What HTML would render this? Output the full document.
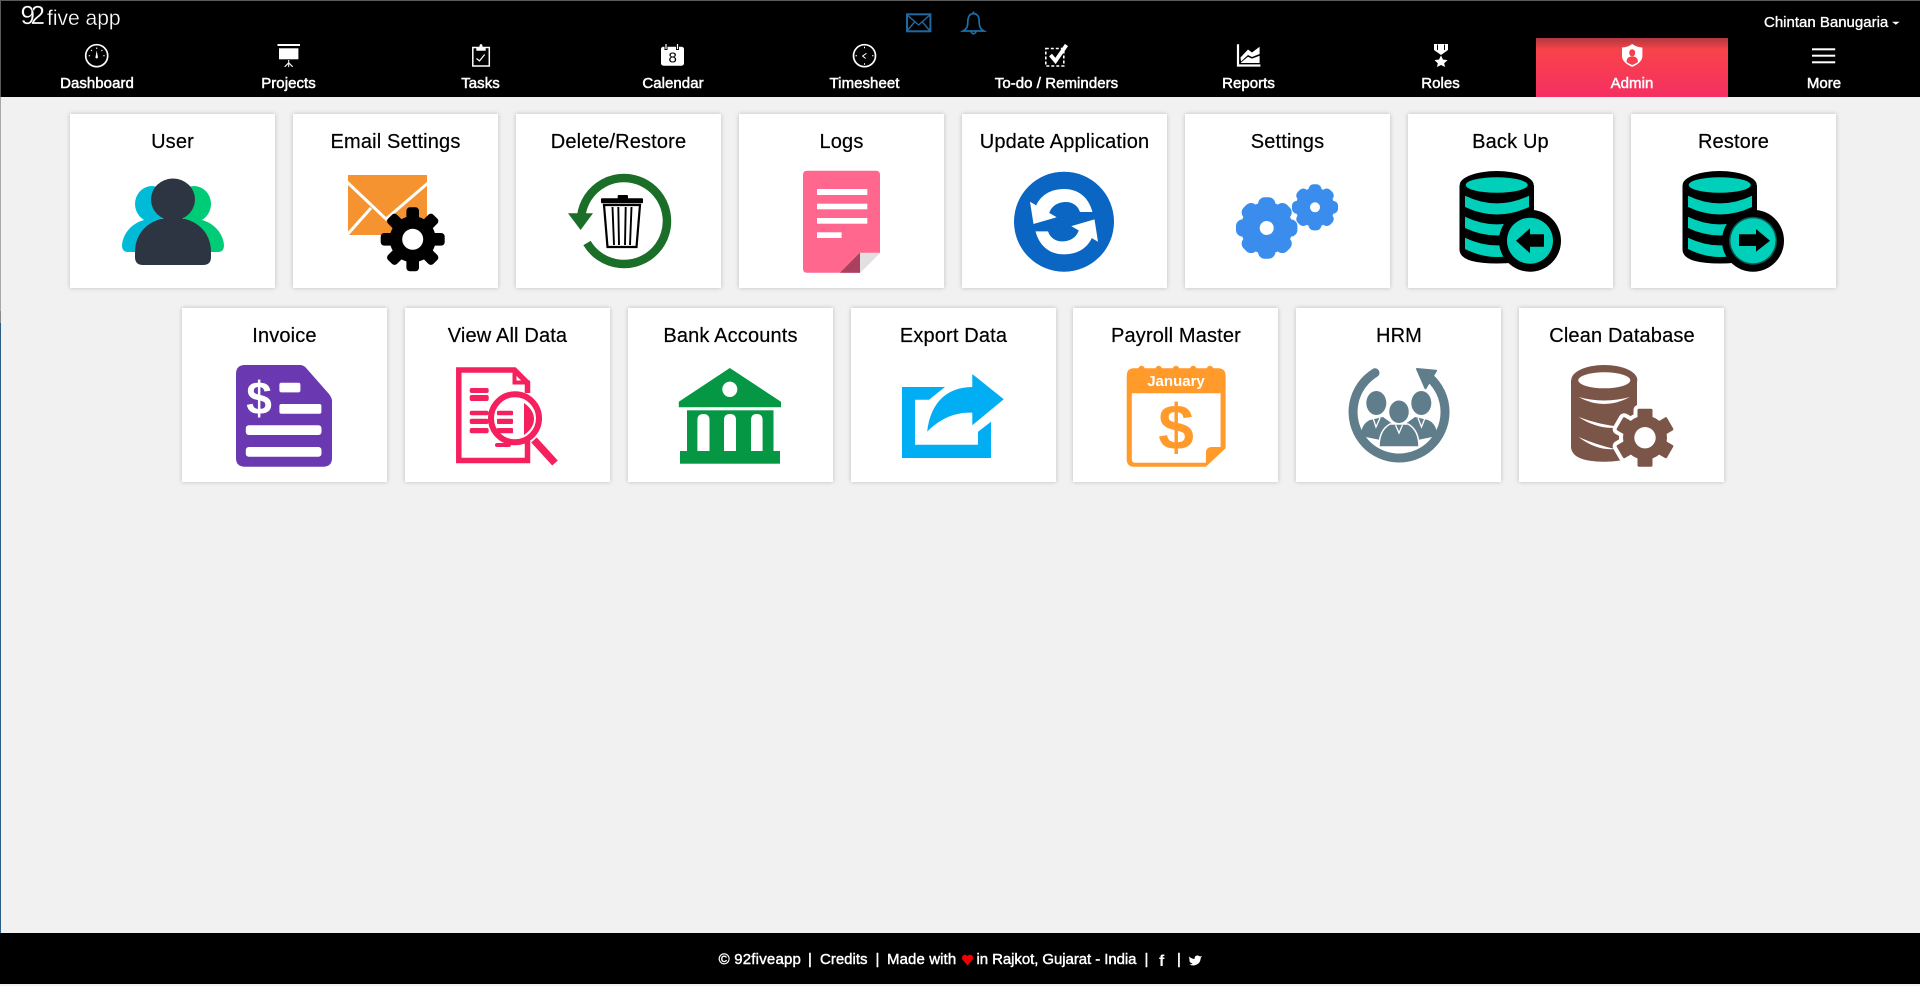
<!DOCTYPE html>
<html lang="en"><head><meta charset="utf-8"><title>Admin</title>
<style>
html,body{margin:0;padding:0;width:1920px;height:986px;overflow:hidden;background:#f1f1f1}
svg{display:block;position:absolute;left:0;top:0}
text{font-family:"Liberation Sans",Arial,sans-serif}
.c{fill:#fff;filter:drop-shadow(0 0 2px rgba(0,0,0,.22))}
.t{font-size:20px;fill:#000;text-anchor:middle;letter-spacing:.15px;stroke:#000;stroke-width:.2px}
.n{font-size:15px;fill:#fff;text-anchor:middle;stroke:#fff;stroke-width:.5px;letter-spacing:.05px}
.f{font-size:15px;fill:#fff;stroke:#fff;stroke-width:.42px}
</style></head><body>
<svg width="1920" height="986" viewBox="0 0 1920 986" xmlns="http://www.w3.org/2000/svg">
<defs>
<linearGradient id="adm" x1="0" y1="0" x2="0" y2="1"><stop offset="0" stop-color="#b0383e"/><stop offset=".2" stop-color="#f9434a"/><stop offset="1" stop-color="#f52f62"/></linearGradient>
<g id="g8"><circle r="23"/><rect x="-6.3" y="-32" width="12.6" height="64" rx="3.5"/><rect x="-6.3" y="-32" width="12.6" height="64" rx="3.5" transform="rotate(45)"/><rect x="-6.3" y="-32" width="12.6" height="64" rx="3.5" transform="rotate(90)"/><rect x="-6.3" y="-32" width="12.6" height="64" rx="3.5" transform="rotate(135)"/></g>
<g id="g8b"><circle r="27"/><rect x="-9" y="-32" width="18" height="64" rx="7"/><rect x="-9" y="-32" width="18" height="64" rx="7" transform="rotate(45)"/><rect x="-9" y="-32" width="18" height="64" rx="7" transform="rotate(90)"/><rect x="-9" y="-32" width="18" height="64" rx="7" transform="rotate(135)"/></g>
<g id="g6"><circle r="22"/><rect x="-7.5" y="-29" width="15" height="58" rx="1.5"/><rect x="-7.5" y="-29" width="15" height="58" rx="1.5" transform="rotate(60)"/><rect x="-7.5" y="-29" width="15" height="58" rx="1.5" transform="rotate(120)"/></g>
</defs>

<rect width="1920" height="986" fill="#f1f1f1"/>
<rect x="0" y="0" width="1" height="311" fill="#a8a8a8"/>
<rect x="0" y="311" width="1" height="12" fill="#8a8a8a"/>
<rect x="0" y="323" width="1" height="610" fill="#2b5d85"/>

<!-- header -->
<rect width="1920" height="97" fill="#000"/>
<rect width="1920" height="1" fill="#5a5a5a"/>
<rect width="1" height="97" fill="#5a5a5a"/>
<rect x="1536" y="38" width="192" height="59" fill="url(#adm)"/>

<!-- logo -->
<text x="20.5" y="24" font-size="26" letter-spacing="-4.500" fill="#fff" stroke="#000" stroke-width=".25">92</text>
<text x="47" y="25" font-size="21" fill="#fff" stroke="#000" stroke-width=".3">five app</text>

<!-- top icons -->
<g fill="none" stroke="#22689e" stroke-width="2">
<rect x="907" y="14.300" width="23.400" height="17"/><path d="M907 14.800L918.600 25L930 14.800M907 31L915 21.500M930 31L922 21.500" stroke-width="1.400"/>
</g>
<path d="M973.500 11.500V13.500C968.500 14 967.800 18 967.800 22C967.800 27 966.500 29 963 31H984C980.500 29 979.200 27 979.200 22C979.200 18 978.500 14 973.500 13.500M970.800 31.500Q973.500 36 976.200 31.500" fill="none" stroke="#1d6fa8" stroke-width="1.700"/>

<text x="1764" y="27" font-size="15" fill="#fff" stroke="#fff" stroke-width=".35">Chintan Banugaria</text>
<path d="M1892 21.700H1899.600L1895.800 24.800Z" fill="#fff"/>

<!-- nav icons -->
<g fill="none" stroke="#fff" stroke-width="1.700">
<circle cx="96.700" cy="55.700" r="11"/>
<path d="M96.700 47.500v1.500M91 50l1 1M102.400 50l-1 1M88.700 55.700h1.500M104.700 55.700h-1.500" stroke-width="1"/>
</g>
<path d="M96.700 50.500L98 57.500Q96.700 59.500 95.400 57.500Z" fill="#fff"/>

<g fill="#fff">
<rect x="277.500" y="44" width="22.500" height="2"/><rect x="279" y="48.300" width="19.400" height="11"/>
<path d="M288.200 60h1v2.500l4 4-1 .6-3-3v3h-1v-3l-3 3-1-.6 4-4z"/>
</g>
<g fill="none" stroke="#fff" stroke-width="1.500">
<rect x="472.800" y="47.500" width="16.500" height="18.500"/>
<path d="M476.500 58.500l3 2.400 5.200-6.400" stroke-width="1.200"/>
</g>
<path d="M476.300 47h3q.3-3 1.700-3t1.700 3h3v3.700h-9.400z" fill="#fff"/>

<rect x="661" y="46.700" width="23" height="19" rx="2.500" fill="#fff"/>
<path d="M666 44v6M677.500 44v6" stroke="#000" stroke-width="3"/>
<path d="M666 44v5M677.500 44v5" stroke="#fff" stroke-width="1.200"/>
<text x="672.700" y="62.500" font-size="15" text-anchor="middle" fill="#000">8</text>

<g fill="none" stroke="#fff" stroke-width="1.700">
<circle cx="864.500" cy="55.700" r="11"/>
<path d="M866.500 53.300L862.600 56L865.700 58.500" stroke-width="1"/>
<path d="M864.500 46.700v1.500M864.500 63.200v1.500M855.500 55.700h1.500M872 55.700h1.500" stroke-width="1"/>
</g>

<rect x="1045.800" y="48.500" width="18" height="17.500" fill="none" stroke="#fff" stroke-width="1.600" stroke-dasharray="3 2"/>
<path d="M1050.500 55L1055.500 61L1066.500 45" fill="none" stroke="#fff" stroke-width="3.800"/>

<path d="M1238 44.300V65.500H1260.400" fill="none" stroke="#fff" stroke-width="2.200"/>
<path d="M1240.500 57.500L1248 49.500L1252 52.500L1259.600 46.700V54L1252 57L1248 55L1241 61.500ZM1241 63V62.500L1248 56.800L1252 58.600L1259.600 55.700V63Z" fill="#fff"/>

<path d="M1434 44H1448V50L1441 55L1434 50Z" fill="#fff"/>
<path d="M1437.500 44.500V50M1444.500 44.500V50" stroke="#000" stroke-width="1"/>
<path d="M1441 55.500L1443 59.500L1447.500 60.100L1444.200 63.200L1445 67L1441 65L1437 67L1437.800 63.200L1434.500 60.100L1439 59.500Z" fill="#fff"/>

<path d="M1632.200 44Q1637 47.500 1642.400 47.500V56Q1642.400 62.500 1632.200 66.900Q1622 62.500 1622 56V47.500Q1627.400 47.500 1632.200 44Z" fill="#fff"/>
<ellipse cx="1632.200" cy="52.800" rx="3" ry="3.600" fill="#f6404f"/>
<path d="M1626.500 62Q1626.500 57.500 1630.500 56.500H1634Q1638 57.500 1638 62Q1635 64 1632.200 65Q1629.500 64 1626.500 62Z" fill="#f6404f"/>

<g fill="#fff"><rect x="1812" y="48.300" width="23.200" height="2"/><rect x="1812" y="54.700" width="23.200" height="2"/><rect x="1812" y="61.300" width="23.200" height="2"/></g>

<!-- nav labels -->
<text class="n" x="97" y="88">Dashboard</text>
<text class="n" x="288.500" y="88">Projects</text>
<text class="n" x="480.500" y="88">Tasks</text>
<text class="n" x="673" y="88">Calendar</text>
<text class="n" x="864.500" y="88">Timesheet</text>
<text class="n" x="1056.500" y="88">To-do / Reminders</text>
<text class="n" x="1248.500" y="88">Reports</text>
<text class="n" x="1440.500" y="88">Roles</text>
<text class="n" x="1632" y="88">Admin</text>
<text class="n" x="1824" y="88">More</text>

<!-- cards row 1 -->
<rect class="c" x="70" y="114" width="205" height="174"/>
<rect class="c" x="293" y="114" width="205" height="174"/>
<rect class="c" x="516" y="114" width="205" height="174"/>
<rect class="c" x="739" y="114" width="205" height="174"/>
<rect class="c" x="962" y="114" width="205" height="174"/>
<rect class="c" x="1185" y="114" width="205" height="174"/>
<rect class="c" x="1408" y="114" width="205" height="174"/>
<rect class="c" x="1631" y="114" width="205" height="174"/>
<!-- cards row 2 -->
<rect class="c" x="182" y="308" width="205" height="174"/>
<rect class="c" x="405" y="308" width="205" height="174"/>
<rect class="c" x="628" y="308" width="205" height="174"/>
<rect class="c" x="851" y="308" width="205" height="174"/>
<rect class="c" x="1073" y="308" width="205" height="174"/>
<rect class="c" x="1296" y="308" width="205" height="174"/>
<rect class="c" x="1519" y="308" width="205" height="174"/>

<text class="t" x="172.500" y="148">User</text>
<text class="t" x="395.500" y="148">Email Settings</text>
<text class="t" x="618.500" y="148">Delete/Restore</text>
<text class="t" x="841.500" y="148">Logs</text>
<text class="t" x="1064.500" y="148">Update Application</text>
<text class="t" x="1287.500" y="148">Settings</text>
<text class="t" x="1510.500" y="148">Back Up</text>
<text class="t" x="1733.500" y="148">Restore</text>
<text class="t" x="284.500" y="342">Invoice</text>
<text class="t" x="507.500" y="342">View All Data</text>
<text class="t" x="730.500" y="342">Bank Accounts</text>
<text class="t" x="953.500" y="342">Export Data</text>
<text class="t" x="1176" y="342">Payroll Master</text>
<text class="t" x="1399" y="342">HRM</text>
<text class="t" x="1622" y="342">Clean Database</text>

<!-- User -->
<ellipse cx="152" cy="204" rx="17" ry="18" fill="#00bbd8"/>
<path d="M122 245C123 232 135 219 152 219H160V252H128Q122 252 122 245Z" fill="#00bbd8"/>
<ellipse cx="194" cy="204" rx="17" ry="18" fill="#00cc78"/>
<path d="M224 245C223 232 211 219 194 219H186V252H218Q224 252 224 245Z" fill="#00cc78"/>
<ellipse cx="173" cy="199.500" rx="22" ry="21" fill="#2d3542"/>
<path d="M135 252C135 232 150 217.500 173 217.500C196 217.500 211 232 211 252V257Q211 265 203 265H143Q135 265 135 257Z" fill="#2d3542"/>

<!-- Email settings -->
<rect x="348" y="175" width="79" height="60" fill="#f59331"/>
<path d="M347 182L386 219L428 183M371 208L347 235" fill="none" stroke="#fff" stroke-width="3"/>
<use href="#g8" transform="translate(412.700 239.300)" fill="#000"/>
<ellipse cx="412.700" cy="239.300" rx="10.500" ry="10.500" fill="#fff"/>

<!-- Delete/Restore -->
<path d="M587 243A43 43 0 1 0 581.400 215" fill="none" stroke="#1a6e28" stroke-width="8.500"/>
<path d="M568 213.300H593L580.600 230Z" fill="#1a6e28"/>
<rect x="601" y="198.300" width="42" height="5" rx="1" fill="#000"/>
<rect x="617.700" y="195" width="10.300" height="4" rx="1" fill="#000"/>
<path d="M604 205H640L636.500 247H607.500Z" fill="none" stroke="#000" stroke-width="2.200"/>
<path d="M612.500 207L614 245M618.300 207L619 245M625.700 207L625 245M631.500 207L630 245" stroke="#000" stroke-width="1.900" fill="none"/>

<!-- Logs -->
<path d="M807 170.700H876Q880 170.700 880 174.700V252.700L860 272.700H807Q803 272.700 803 268.700V174.700Q803 170.700 807 170.700Z" fill="#ff678f"/>
<g fill="#fff"><rect x="817" y="189" width="50.300" height="6"/><rect x="817" y="203.700" width="50.300" height="5.600"/><rect x="817" y="218" width="50.300" height="5.700"/><rect x="817" y="232.300" width="24.600" height="5.700"/></g>
<path d="M860 252.700L840 272.700H860Z" fill="#a8405e"/>
<path d="M860 252.700H880L860 272.700Z" fill="#e0e0e0"/>

<!-- Update -->
<circle cx="1064" cy="221.700" r="50" fill="#0a66c2"/>
<g fill="#fff">
<path d="M1092.500 212C1088 195 1076 189 1064 189C1050 189 1040 196 1036 206L1049 214C1051 206 1058 202 1066 202C1073 202 1078 206 1080 212Z"/>
<path d="M1030 201.700L1033.500 224L1056.700 217.300Z"/>
</g>
<g fill="#fff" transform="rotate(180 1064 221.700)">
<path d="M1092.500 212C1088 195 1076 189 1064 189C1050 189 1040 196 1036 206L1049 214C1051 206 1058 202 1066 202C1073 202 1078 206 1080 212Z"/>
<path d="M1030 201.700L1033.500 224L1056.700 217.300Z"/>
</g>

<!-- Settings -->
<use href="#g8b" transform="translate(1266.700 228) scale(.96)" fill="#3a8ced"/>
<circle cx="1266.700" cy="228" r="7" fill="#fff"/>
<use href="#g8b" transform="translate(1315 207.300) scale(.72)" fill="#3a8ced"/>
<circle cx="1315" cy="207.300" r="5" fill="#fff"/>

<!-- Back up -->
<ellipse cx="1496.700" cy="185" rx="37" ry="14" fill="#000"/>
<path d="M1459.500 185V250Q1460 263.500 1497 263.500Q1534 263.500 1534 250V185Z" fill="#000"/>
<ellipse cx="1496.700" cy="185" rx="31" ry="7.700" fill="#00cfb9"/>
<path d="M1465 195.700Q1497 211 1529 195.700V207Q1497 222 1465 207Z" fill="#00cfb9"/>
<path d="M1465 216.700Q1497 232 1529 216.700V228Q1497 243 1465 228Z" fill="#00cfb9"/>
<path d="M1465 237.700Q1497 253 1529 237.700V249Q1497 265 1465 249Z" fill="#00cfb9"/>
<circle cx="1530" cy="240.700" r="31" fill="#000"/>
<circle cx="1530" cy="240.700" r="23" fill="#00cfb9"/>
<path d="M1516 240.700L1530 228.300V234.300H1544V246.700H1530V253.300Z" fill="#000"/>

<!-- Restore -->
<ellipse cx="1719.700" cy="185" rx="37" ry="14" fill="#000"/>
<path d="M1682.500 185V250Q1683 263.500 1720 263.500Q1757 263.500 1757 250V185Z" fill="#000"/>
<ellipse cx="1719.700" cy="185" rx="31" ry="7.700" fill="#00cfb9"/>
<path d="M1688 195.700Q1720 211 1752 195.700V207Q1720 222 1688 207Z" fill="#00cfb9"/>
<path d="M1688 216.700Q1720 232 1752 216.700V228Q1720 243 1688 228Z" fill="#00cfb9"/>
<path d="M1688 237.700Q1720 253 1752 237.700V249Q1720 265 1688 249Z" fill="#00cfb9"/>
<circle cx="1753" cy="240.700" r="31" fill="#000"/>
<circle cx="1753" cy="240.700" r="24" fill="#06564f"/>
<circle cx="1753" cy="240.700" r="22.500" fill="#00cfb9"/>
<path d="M1739 234.300H1756V229L1770 240.700L1756 251.700V246H1739Z" fill="#000"/>

<!-- Invoice -->
<path d="M245 365H300Q304 365 307 369L329 394Q332 398 332 401V458Q332 466.700 323 466.700H245Q236 466.700 236 458V374Q236 365 245 365Z" fill="#6a38b0"/>
<text x="259" y="414" font-size="46" font-weight="bold" fill="#fff" text-anchor="middle">$</text>
<g fill="#fff"><rect x="279.400" y="382.700" width="21" height="9.700" rx="2"/><rect x="279.400" y="404" width="42" height="9.700" rx="2"/><rect x="245.800" y="425.300" width="75.700" height="9.700" rx="3"/><rect x="245.800" y="447" width="75.700" height="9.700" rx="3"/></g>

<!-- View all data -->
<path d="M527.500 441V460.500H458.800V370H514.500L527.500 383V393" fill="none" stroke="#f5205e" stroke-width="5.500"/>
<path d="M514.500 369V382.500H530" fill="none" stroke="#f5205e" stroke-width="4"/>
<g fill="#f5205e"><rect x="469.700" y="388" width="19" height="5" rx="2"/><rect x="469.700" y="395" width="19" height="6" rx="2"/><rect x="469.700" y="410.700" width="19" height="4.500" rx="2"/><rect x="469.700" y="418.700" width="19" height="5.300" rx="2"/><rect x="469.700" y="428" width="19" height="5.300" rx="2"/></g>
<circle cx="515" cy="418.300" r="24" fill="#fff" stroke="#f5205e" stroke-width="6"/>
<g fill="#f5205e"><rect x="497" y="410.700" width="16" height="4.500" rx="1"/><rect x="497" y="418.700" width="16" height="5.300" rx="1"/><rect x="497" y="428" width="16" height="5.300" rx="1"/>
<path d="M524 403Q534 410 534 419Q534 428 524 435Z"/></g>
<rect x="495" y="443" width="16" height="4" rx="2" fill="#f5205e"/>
<path d="M534 440L555 463" stroke="#f5205e" stroke-width="7.500" fill="none"/>

<!-- Bank -->
<path d="M729.800 368L781 401.700V407.300H678.800V401.700Z" fill="#059744"/>
<ellipse cx="729.800" cy="389.300" rx="7.500" ry="7.700" fill="#fff"/>
<rect x="687" y="410.300" width="86.500" height="41" fill="#059744"/>
<rect x="680" y="451" width="100" height="12.700" fill="#059744"/>
<g fill="#fff"><path d="M697.400 451V420Q697.400 414 703.400 414Q709.500 414 709.500 420V451Z"/><path d="M724 451V420Q724 414 730 414Q736 414 736 420V451Z"/><path d="M751 451V420Q751 414 756.800 414Q762.600 414 762.600 420V451Z"/></g>

<!-- Export -->
<path d="M902 387H945L929 399.700H915V444.700H978V431.700L991 421.700V458H902Z" fill="#02aef3"/>
<path d="M1003.800 399.300L972.300 374V387C945 387 930 405 927.200 431.700C937 421.700 952 411.700 972.300 412.700V425.300Z" fill="#02aef3"/>

<!-- Payroll -->
<g fill="#ff9a2b">
<circle cx="1141.500" cy="369" r="3.200"/><circle cx="1158.700" cy="369" r="3.200"/><circle cx="1176" cy="369" r="3.200"/><circle cx="1193.200" cy="369" r="3.200"/><circle cx="1210" cy="369" r="3.200"/>
<path d="M1134 368.300H1218Q1225.600 368.300 1225.600 376V448.300L1205.900 466.700H1134Q1126.700 466.700 1126.700 459V376Q1126.700 368.300 1134 368.300Z"/>
</g>
<path d="M1131.800 393.300H1220.600V447H1212Q1205.900 447 1205.900 453V462.700H1135Q1131.800 462.700 1131.800 459Z" fill="#fff"/>
<text x="1176" y="386" font-size="15" font-weight="bold" fill="#fff" text-anchor="middle">January</text>
<text x="1176" y="449" font-size="64" font-weight="bold" fill="#ff9a2b" text-anchor="middle">$</text>

<!-- HRM -->
<path d="M1375 372.800A46 46 0 1 0 1430 378" fill="none" stroke="#607d8b" stroke-width="9" stroke-linecap="round"/>
<path d="M1417 369L1436 370.700L1425.500 388.300Z" fill="#607d8b" stroke="#607d8b" stroke-width="2" stroke-linejoin="round"/>
<g fill="#607d8b">
<ellipse cx="1376.300" cy="403" rx="10" ry="12"/>
<ellipse cx="1421.300" cy="403" rx="10" ry="12"/>
<path d="M1361 436Q1361 424 1370 420L1383 417L1394 425L1390 442Z"/>
<path d="M1437 436Q1437 424 1428 420L1415 417L1404 425L1408 442Z"/>
<path d="M1379 447Q1379 430 1390 424H1408Q1419 430 1419 447Z" stroke="#fff" stroke-width="1.500"/>
<ellipse cx="1399" cy="411.700" rx="10.500" ry="12" stroke="#fff" stroke-width="1.500"/>
</g>
<path d="M1395.500 425L1399 433L1402.500 425M1373 418L1376 427L1380 418M1418 418L1421.500 427L1425 418" fill="none" stroke="#fff" stroke-width="1.300"/>

<!-- Clean DB -->
<ellipse cx="1604.300" cy="380" rx="33" ry="15" fill="#7b5548"/>
<path d="M1571 380V447Q1572 461.700 1604 461.700Q1637 461.700 1637 447V380Z" fill="#7b5548"/>
<ellipse cx="1604.300" cy="380.300" rx="26" ry="8" fill="#fff"/>
<g fill="#fff">
<path d="M1578.500 397Q1604 411 1630 397Q1604 404 1578.500 397Z"/>
<path d="M1578.500 417Q1600 431 1622 427Q1600 425 1578.500 417Z"/>
<path d="M1578.500 437Q1597 451 1615 449Q1597 445 1578.500 437Z"/>
</g>
<use href="#g6" transform="translate(1645 437.700)" fill="#fff" stroke="#fff" stroke-width="8"/>
<use href="#g6" transform="translate(1645 437.700)" fill="#7b5548"/>
<circle cx="1645" cy="437.700" r="10.700" fill="#fff"/>

<!-- footer -->
<rect x="0" y="933" width="1920" height="51" fill="#000"/>
<text class="f" x="718.600" y="964" letter-spacing=".2">© 92fiveapp</text>
<text class="f" x="808" y="964">|</text>
<text class="f" x="820" y="964">Credits</text>
<text class="f" x="875.500" y="964">|</text>
<text class="f" x="887" y="964" letter-spacing=".1">Made with</text>
<path d="M967.500 965.500L962.300 959.500C960.800 956 964.500 953 967.500 956C970.500 953 974.200 956 972.700 959.500Z" fill="#ee0000"/>
<text class="f" x="976.500" y="964" letter-spacing="-.07">in Rajkot, Gujarat - India</text>
<text class="f" x="1144.500" y="964">|</text>
<text x="1159" y="966" font-size="16" font-weight="bold" fill="#fff">f</text>
<text class="f" x="1177" y="964">|</text>
<path d="M1189 956.500Q1192 959 1194.500 959Q1194.500 955 1198 955.500Q1199.500 956 1200 956.500L1202 956L1200.700 958Q1200.500 964 1194 965.500Q1191 965.500 1189 964.500Q1191.500 964.500 1192.500 963.500Q1190 963 1189.500 961Q1189.500 959 1189 956.500Z" fill="#fff"/>
</svg>
</body></html>
